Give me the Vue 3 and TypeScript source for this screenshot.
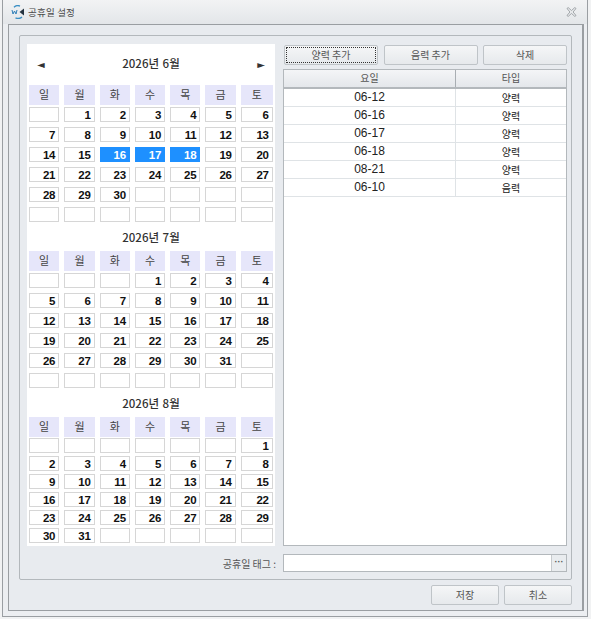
<script setup lang="ts">
const weekdays = ['일', '월', '화', '수', '목', '금', '토']

interface Month {
  title: string
  cells: (number | null)[]
  selected: number[]
  nav: boolean
  compact: boolean
}

function buildCells(start: number, length: number): (number | null)[] {
  return Array.from({ length: 42 }, (_, i) => {
    const d = i - start + 1
    return d >= 1 && d <= length ? d : null
  })
}

const months: Month[] = [
  { title: '2026년 6월', cells: buildCells(1, 30), selected: [16, 17, 18], nav: true, compact: false },
  { title: '2026년 7월', cells: buildCells(3, 31), selected: [], nav: false, compact: false },
  { title: '2026년 8월', cells: buildCells(6, 31), selected: [], nav: false, compact: true },
]

const rows = [
  { date: '06-12', type: '양력' },
  { date: '06-16', type: '양력' },
  { date: '06-17', type: '양력' },
  { date: '06-18', type: '양력' },
  { date: '08-21', type: '양력' },
  { date: '06-10', type: '음력' },
]
</script>

<template>
  <div class="page">
    <div class="window">
      <header class="titlebar">
        <svg class="logo" viewBox="0 0 14 14" width="14" height="14" aria-hidden="true">
          <path d="M3 2.2A6 6 0 0 1 9 1" fill="none" stroke="#3a8fc4" stroke-width="1.4" />
          <path d="M4.5 12.8A6 6 0 0 0 11 12" fill="none" stroke="#3a8fc4" stroke-width="1.4" />
          <path d="M1 5l1 4 1.5-3 1.5 3 1-4" fill="none" stroke="#2f7fb8" stroke-width="1" />
          <path d="M13 3.5v7L8.5 7z" fill="#25333f" />
        </svg>
        <span class="window-title">공휴일 설정</span>
        <svg class="close" viewBox="0 0 11 10" width="11" height="10" aria-hidden="true">
          <path d="M1 1.5L2.2 .6 5.5 3.6 8.8 .6 10 1.5 7 5 10 8.5 8.8 9.4 5.5 6.4 2.2 9.4 1 8.5 4 5z" fill="#eef0f2" stroke="#8b9094" stroke-width=".8" />
        </svg>
      </header>

      <div class="client">
        <section class="group">
          <div class="main">
            <div class="calendar">
              <div v-for="m in months" :key="m.title" class="month" :class="{ compact: m.compact, first: m.nav }">
                <div class="month-title">
                  <span v-if="m.nav" class="nav">◄</span>
                  <span class="month-name">{{ m.title }}</span>
                  <span v-if="m.nav" class="nav">►</span>
                </div>
                <div class="grid">
                  <div v-for="w in weekdays" :key="w" class="head">{{ w }}</div>
                  <div
                    v-for="(c, i) in m.cells"
                    :key="i"
                    class="cell"
                    :class="{ on: c !== null && m.selected.includes(c) }"
                  >{{ c }}</div>
                </div>
              </div>
            </div>

            <div class="side">
              <div class="actions">
                <button class="btn focus" type="button"><span>양력 추가</span></button>
                <button class="btn lunar" type="button"><span>음력 추가</span></button>
                <button class="btn del" type="button"><span>삭제</span></button>
              </div>
              <div class="table">
                <div class="tr thead">
                  <div class="td c1">요일</div>
                  <div class="td c2">타입</div>
                </div>
                <div v-for="(r, i) in rows" :key="i" class="tr">
                  <div class="td c1 date">{{ r.date }}</div>
                  <div class="td c2">{{ r.type }}</div>
                </div>
              </div>
            </div>
          </div>

          <div class="tag-row">
            <label class="tag-label">공휴일 태그 :</label>
            <div class="tag-input">
              <div class="tag-field"></div>
              <div class="tag-more">···</div>
            </div>
          </div>
        </section>

        <footer class="footer">
          <button class="btn foot" type="button"><span>저장</span></button>
          <button class="btn foot" type="button"><span>취소</span></button>
        </footer>
      </div>
    </div>
  </div>
</template>

<style scoped>
.page {
  width: 591px;
  height: 619px;
  box-sizing: border-box;
  padding: 0 3px 2px 2px;
  background: #f1f2f3;
  font-family: "Noto Sans CJK KR", "Liberation Sans", sans-serif;
  font-size: 10px;
  color: #444;
}
.window {
  height: 100%;
  box-sizing: border-box;
  border: 1px solid #9a9ea2;
  border-top: 0;
  background: #eceef1;
  padding: 0 3px 5px 5px;
  display: flex;
  flex-direction: column;
}
.titlebar {
  height: 24px;
  flex: none;
  display: flex;
  align-items: center;
  gap: 3px;
  margin: 0 -3px 0 -5px;
  padding-left: 8px;
  padding-right: 10px;
  background: linear-gradient(#f2f3f4, #e3e6e9);
}
.logo { flex: none; }
.window-title { font-size: 9.5px; letter-spacing: .2px; color: #4a4a4a; }
.close { margin-left: auto; }
.client {
  flex: 1;
  min-height: 0;
  box-sizing: border-box;
  border: 1px solid #9a9ea2;
  border-right-width: 2px;
  background: #e8ebef;
  padding: 10px 10px 6px 10px;
  display: flex;
  flex-direction: column;
}
.group {
  height: 545px;
  flex: none;
  box-sizing: border-box;
  border: 1px solid #b3b8bc;
  border-radius: 2px;
  padding: 8px 4px 8px 7px;
  display: flex;
  flex-direction: column;
}
.main {
  height: 502px;
  flex: none;
  display: flex;
  gap: 8px;
}
.calendar {
  width: 248px;
  flex: none;
  box-sizing: border-box;
  background: #fff;
  padding: 0 2px;
}
.month-title {
  height: 29px;
  display: flex;
  align-items: center;
  justify-content: center;
}
.first .month-title {
  height: 41px;
  box-sizing: border-box;
  justify-content: space-between;
  padding: 0 8px 3px 8px;
}
.month-name {
  font-size: 11.5px;
  font-weight: 500;
  color: #333;
  word-spacing: 1px;
}
.nav {
  font-size: 10px;
  color: #333;
  line-height: 1;
  font-family: "DejaVu Sans", sans-serif;
  margin-top: 3px;
}
.grid {
  display: grid;
  grid-template-columns: repeat(6, 30.3px) 32px;
  grid-template-rows: 17px;
  grid-auto-rows: 15px;
  column-gap: 5px;
  row-gap: 5px;
}
.compact .grid {
  row-gap: 3px;
  grid-template-rows: 18px;
}
.head {
  grid-row: 1;
  height: 20px;
  margin-bottom: -3px;
  background: #e6e6fa;
  font-size: 11px;
  line-height: 19px;
  text-align: center;
  color: #444;
}
.cell {
  box-sizing: border-box;
  height: 15px;
  border: 1px solid #d6d6d6;
  background: #fff;
  font-family: "Liberation Sans", sans-serif;
  font-weight: 700;
  font-size: 11.5px;
  letter-spacing: -.2px;
  line-height: 15px;
  text-align: right;
  padding-right: 3px;
  color: #111;
}
.compact .cell { line-height: 14px; }
.cell.on {
  background: #1e90ff;
  border-color: #1e90ff;
  color: #fff;
}
.side {
  flex: 1;
  min-width: 0;
  display: flex;
  flex-direction: column;
  gap: 4px;
}
.actions {
  display: flex;
  height: 20px;
  margin: 1px 0 0 1px;
  flex: none;
}
.btn {
  box-sizing: border-box;
  height: 20px;
  padding: 0 0 2px;
  border: 1px solid #bfc4c8;
  border-radius: 2px;
  background: linear-gradient(#f5f6f7, #e6e9ec);
  font-family: inherit;
  font-size: 10px;
  color: #555;
}
.focus { width: 94px; padding: 1px; }
.focus span {
  display: block;
  height: 100%;
  line-height: 13px;
  box-sizing: border-box;
  border: 1px dotted #333;
}
.lunar { width: 94px; margin-left: 5.5px; }
.del { width: 84px; margin-left: 5.5px; }
.table {
  flex: 1;
  min-height: 0;
  box-sizing: border-box;
  border: 1px solid #b3b8bc;
  background: #fff;
}
.tr {
  display: flex;
  height: 18px;
  box-sizing: border-box;
  border-bottom: 1px solid #dfe3e6;
}
.thead {
  height: 19px;
  background: linear-gradient(#f4f5f7, #e4e7eb);
  border-bottom: 2px solid #b3b8bc;
}
.td {
  box-sizing: border-box;
  text-align: center;
  line-height: 17px;
  font-size: 10px;
  color: #222;
}
.thead .td { color: #555; line-height: 16px; }
.c1 { width: 172px; border-right: 1px solid #dfe3e6; }
.thead .c1 { border-right-color: #a9aeb3; }
.c2 { flex: 1; }
.date {
  font-family: "Liberation Sans", sans-serif;
  font-size: 12px;
}
.tag-row {
  display: flex;
  align-items: center;
  justify-content: flex-end;
  gap: 7px;
  margin-top: 8px;
  height: 18px;
}
.tag-label { font-size: 10px; color: #555; }
.tag-input {
  width: 284px;
  height: 18px;
  box-sizing: border-box;
  flex: none;
  display: flex;
  border: 1px solid #b3b8bc;
  background: #fff;
}
.tag-field { flex: 1; }
.tag-more {
  width: 14px;
  border-left: 1px solid #c6cacd;
  background: #e9ecef;
  font-family: "Liberation Sans", sans-serif;
  font-size: 9px;
  font-weight: 700;
  line-height: 15px;
  text-align: center;
  color: #555;
}
.footer {
  display: flex;
  justify-content: flex-end;
  gap: 5px;
  margin-top: 5px;
}
.foot { width: 68px; height: 20px; }
</style>
